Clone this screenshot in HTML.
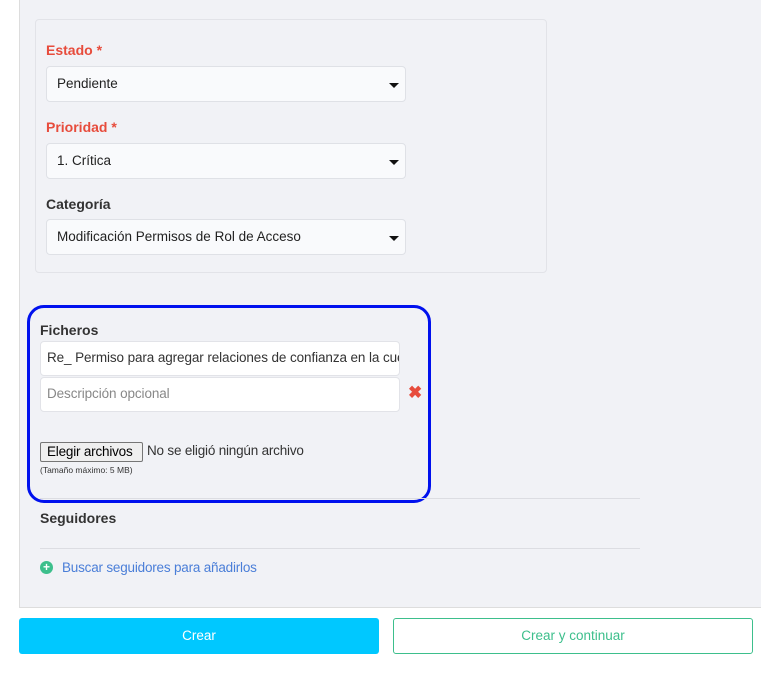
<!DOCTYPE html>
<html><head><meta charset="utf-8"><style>
*{box-sizing:border-box;margin:0;padding:0}
body{width:761px;height:678px;background:#fff;font-family:"Liberation Sans",Arial,sans-serif;position:relative;overflow:hidden;color:#333}
.abs{position:absolute;white-space:nowrap}
.panel{left:19px;top:-2px;width:745px;height:610px;background:#f1f2f6;border-left:1px solid #ddd;border-bottom:1px solid #ddd}
.card{left:35px;top:19px;width:512px;height:254px;border:1px solid #e2e3e8;border-radius:4px}
.lbl{font-size:14px;font-weight:bold;left:46px}
.red{color:#e74c3c}
.sel{left:46px;width:360px;height:36px;background:#f9fafc;border:1px solid #dfe1e6;border-radius:4px;font-size:13.5px;padding:9px 10px;color:#222}
.sel:after{content:"";position:absolute;right:6px;top:16px;border-left:5px solid transparent;border-right:5px solid transparent;border-top:5px solid #111}
.blue{left:27px;top:305px;width:404px;height:198px;border:3px solid #0011ee;border-radius:17px}
.inp{left:40px;width:360px;height:35px;background:#fff;border:1px solid #e2e3e8;border-radius:4px;font-size:13.5px;padding:8px 6px;overflow:hidden;letter-spacing:-0.1px}
.line{left:40px;width:600px;height:1px;background:#dcdde2}
</style></head><body>
<div class="abs panel"></div>
<div class="abs card"></div>
<div class="abs lbl red" style="top:42px">Estado *</div>
<div class="abs sel" style="top:66px">Pendiente</div>
<div class="abs lbl red" style="top:119px">Prioridad *</div>
<div class="abs sel" style="top:143px">1. Crítica</div>
<div class="abs lbl" style="top:196px">Categoría</div>
<div class="abs sel" style="top:219px">Modificación Permisos de Rol de Acceso</div>
<div class="abs blue"></div>
<div class="abs lbl" style="left:40px;top:322px;font-size:14px">Ficheros</div>
<div class="abs inp" style="top:341px">Re_ Permiso para agregar relaciones de confianza en la cuenta</div>
<div class="abs inp" style="top:377px;color:#888">Descripción opcional</div>
<div class="abs" style="left:408px;top:383px;color:#e74c3c;font-size:17px;font-weight:bold">✖</div>
<div class="abs" style="left:40px;top:442px;width:103px;height:20px;background:#efefef;border:1px solid #767676;border-radius:2px;font-size:13.5px;padding:1px 6px;color:#000;letter-spacing:-0.2px">Elegir archivos</div>
<div class="abs" style="left:147px;top:443px;font-size:13.5px;color:#333;letter-spacing:-0.2px">No se eligió ningún archivo</div>
<div class="abs" style="left:40px;top:465px;font-size:8.5px;color:#333">(Tamaño máximo: 5 MB)</div>
<div class="abs line" style="top:498px"></div>
<div class="abs lbl" style="left:40px;top:510px;font-size:14px">Seguidores</div>
<div class="abs line" style="top:548px"></div>
<div class="abs" style="left:40px;top:561px;width:13px;height:13px;border-radius:50%;background:#3dbf8c;color:#fff;font-size:12px;font-weight:bold;line-height:13px;text-align:center">+</div>
<div class="abs" style="left:62px;top:560px;font-size:13.5px;color:#4a7ed8;letter-spacing:-0.2px">Buscar seguidores para añadirlos</div>
<div class="abs" style="left:19px;top:618px;width:360px;height:36px;background:#00c8ff;border-radius:3px;color:#fff;font-size:13.5px;text-align:center;line-height:36px">Crear</div>
<div class="abs" style="left:393px;top:618px;width:360px;height:36px;border:1px solid #3dbf8c;border-radius:3px;color:#3dbf8c;font-size:13.5px;text-align:center;line-height:34px">Crear y continuar</div>
</body></html>
